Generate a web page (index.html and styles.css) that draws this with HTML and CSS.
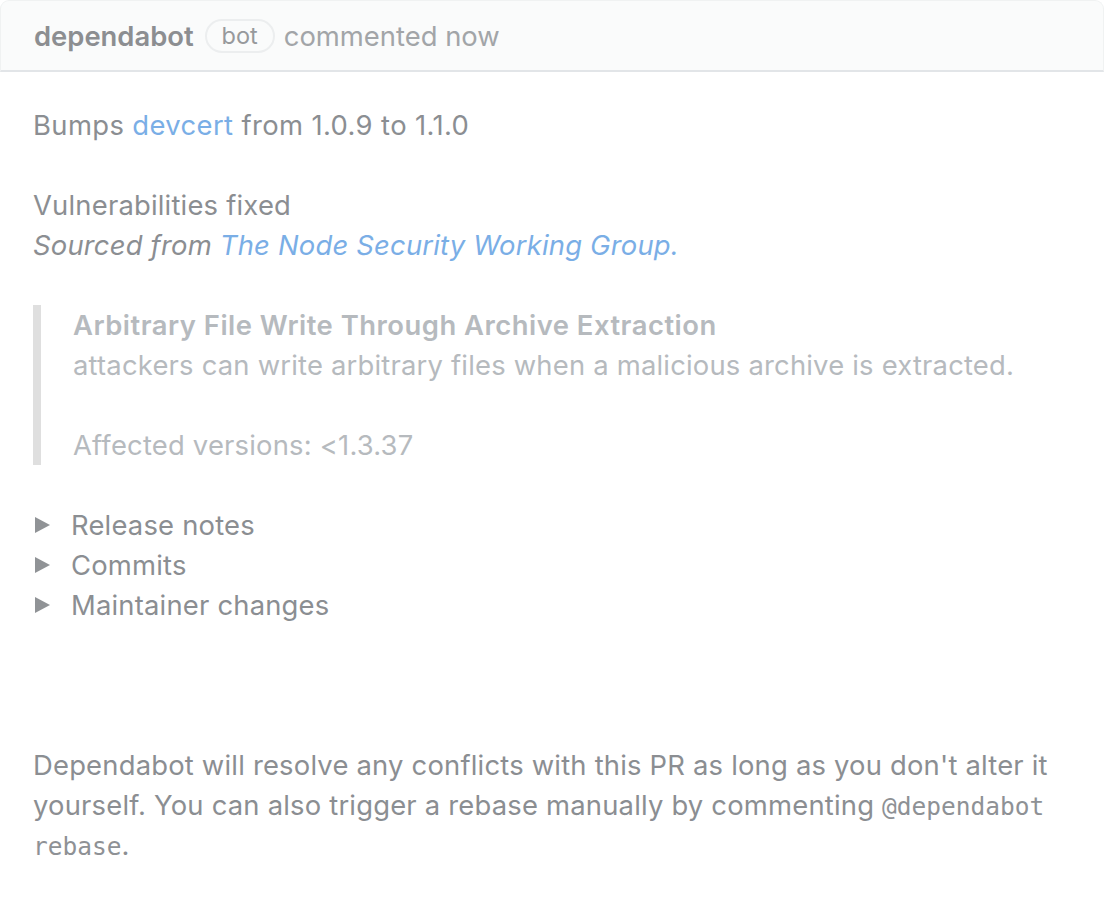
FILE: index.html
```html
<!DOCTYPE html>
<html lang="en">
<head>
<meta charset="utf-8">
<title>dependabot commented</title>
<link rel="stylesheet" href="styles.css">
</head>
<body>
<div class="comment">
  <div class="comment-header">
    <strong class="author">dependabot</strong>
    <span class="badge">bot</span>
    <span class="meta">commented now</span>
  </div>
  <div class="comment-body">
    <p class="lead">Bumps <a class="link" href="#">devcert</a> from 1.0.9 to 1.1.0</p>
    <p>Vulnerabilities fixed<br><em>Sourced from <a class="link" href="#">The Node Security Working Group.</a></em></p>
    <blockquote class="quote">
      <p><strong>Arbitrary File Write Through Archive Extraction</strong><br>attackers can write arbitrary files when a malicious archive is extracted.</p>
      <p>Affected versions: &lt;1.3.37</p>
    </blockquote>
    <div class="disclosures">
      <div class="disclosure"><span class="tri"></span><span>Release notes</span></div>
      <div class="disclosure"><span class="tri"></span><span>Commits</span></div>
      <div class="disclosure"><span class="tri"></span><span>Maintainer changes</span></div>
    </div>
    <p class="note">Dependabot will resolve any conflicts with this PR as long as you don't alter it yourself. You can also trigger a rebase manually by commenting <code class="code">@dependabot rebase</code>.</p>
  </div>
</div>
</body>
</html>
```

FILE: styles.css
```css
html, body {
  margin: 0;
  padding: 0;
  background: #ffffff;
}

body {
  font-family: "Inter", "Liberation Sans", sans-serif;
  font-size: 27.4px;
  line-height: 40px;
  letter-spacing: 0.2px;
  color: #8b8e92;
}

.comment {
  width: 1104px;
}

.comment-header {
  height: 72px;
  box-sizing: border-box;
  display: flex;
  align-items: center;
  padding: 0 0 0 33px;
  background: #fafbfb;
  border: 1px solid #f0f2f2;
  border-bottom: 2px solid #e2e5e8;
  border-radius: 9px 9px 0 0;
  letter-spacing: 0;
}

.author {
  font-weight: 600;
  color: #8c8e91;
}

.badge {
  display: inline-flex;
  align-items: center;
  height: 34px;
  box-sizing: border-box;
  margin: 0 9px 0 11px;
  padding: 0 15px;
  border: 2px solid #eceeef;
  border-radius: 17px;
  font-size: 23.5px;
  color: #97999c;
}

.meta {
  color: #a2a5a8;
}

.comment-body {
  padding: 33px 33px 0 33px;
}

.comment-body p {
  margin: 0 0 40px 0;
}

.lead {
  letter-spacing: 0.38px;
}

.link {
  color: #7aaee6;
  text-decoration: none;
}

.quote {
  margin: 0 0 40px 0;
  padding: 0 0 0 32px;
  border-left: 8px solid #dfdfdf;
  color: #b6babe;
}

.quote p {
  margin: 0 0 40px 0;
}

.quote p:last-child {
  margin-bottom: 0;
}

.quote strong {
  font-weight: 600;
  letter-spacing: 0.5px;
}

.disclosures {
  display: flex;
  flex-direction: column;
  margin-bottom: 120px;
}

.disclosure {
  display: flex;
  align-items: center;
  gap: 21px;
  padding-left: 2px;
}

.tri {
  width: 0;
  height: 0;
  border-top: 8px solid transparent;
  border-bottom: 8px solid transparent;
  border-left: 15px solid #909396;
}

.note {
  color: #8b8e92;
}

.code {
  font-family: "DejaVu Sans Mono", "Liberation Mono", monospace;
  font-size: 24.5px;
  line-height: 1;
  letter-spacing: 0;
  color: #8e9195;
}
```
